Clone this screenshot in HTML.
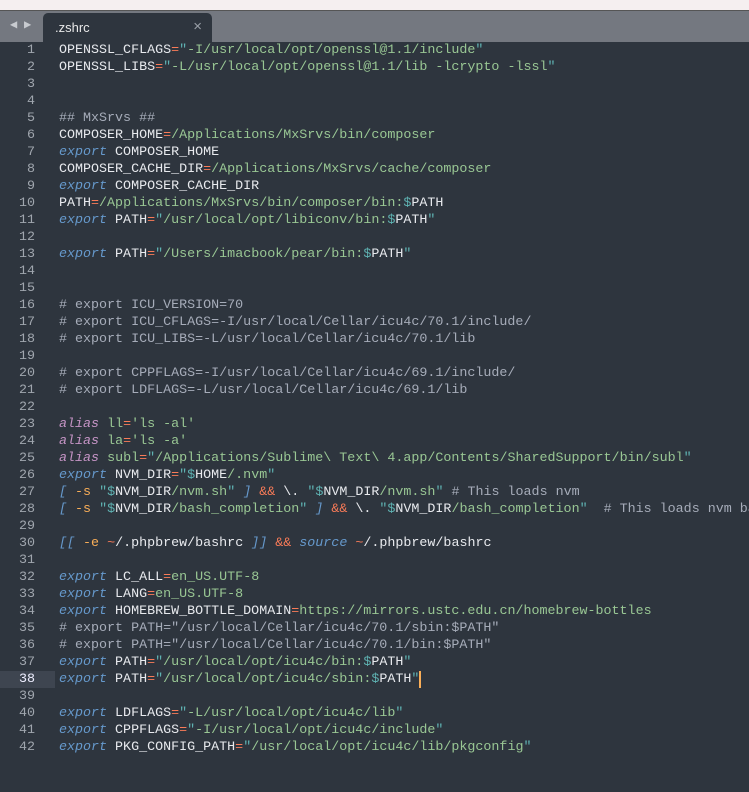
<!DOCTYPE html>
<html><head><meta charset="utf-8"><style>
body{margin:0;width:749px;height:792px;overflow:hidden;background:#2e353e;font-family:"Liberation Mono",monospace;position:relative;}
.top{position:absolute;left:0;top:0;width:749px;height:10px;background:#f5eff0;border-bottom:1px solid #555;}
.bar{position:absolute;left:0;top:11px;width:749px;height:31px;background:#747880;}
.tab{position:absolute;left:43px;top:13px;width:169px;height:29px;background:#2e353e;border-radius:5px 5px 0 0;font-family:"Liberation Sans",sans-serif;font-size:13px;color:#e8e8e8;}
.tab .n{position:absolute;left:12px;top:7px;}
.tab .x{position:absolute;right:10px;top:5px;color:#9aa0a8;font-size:15px;}
.arr{position:absolute;top:17px;font-size:12px;color:#c8cbd0;}
.g{position:absolute;left:0;top:42px;width:55px;}
.g div{height:17px;line-height:17px;font-size:13.35px;color:#a0a6ae;text-align:right;padding-right:20px;}
.g div.h{background:#3e4550;color:#eef;}
.code{position:absolute;left:59px;top:42px;width:690px;overflow:hidden;font-size:13.35px;color:#e8eaee;}
.code div{height:17px;line-height:17px;white-space:pre;}
.k{color:#6699cc;font-style:italic}.p{color:#c594c5;font-style:italic}.s{color:#99c794}.q{color:#5fb3b3}.o{color:#f97b58}.c{color:#a6acb9}.y{color:#f9ae58}
.cur{display:inline-block;width:2px;height:17px;background:#f9ae58;vertical-align:top;}
</style></head><body>
<div class="top"></div><div class="bar"></div>
<div class="arr" style="left:10px">◀</div><div class="arr" style="left:24px">▶</div>
<div class="tab"><span class="n">.zshrc</span><span class="x">×</span></div>
<div class="g">
<div>1</div><div>2</div><div>3</div><div>4</div><div>5</div><div>6</div><div>7</div><div>8</div><div>9</div><div>10</div><div>11</div><div>12</div><div>13</div><div>14</div><div>15</div><div>16</div><div>17</div><div>18</div><div>19</div><div>20</div><div>21</div><div>22</div><div>23</div><div>24</div><div>25</div><div>26</div><div>27</div><div>28</div><div>29</div><div>30</div><div>31</div><div>32</div><div>33</div><div>34</div><div>35</div><div>36</div><div>37</div><div class="h">38</div><div>39</div><div>40</div><div>41</div><div>42</div>
</div>
<div class="code">
<div>OPENSSL_CFLAGS<span class="o">=</span><span class="q">"</span><span class="s">-I/usr/local/opt/openssl@1.1/include</span><span class="q">"</span></div>
<div>OPENSSL_LIBS<span class="o">=</span><span class="q">"</span><span class="s">-L/usr/local/opt/openssl@1.1/lib -lcrypto -lssl</span><span class="q">"</span></div>
<div> </div>
<div> </div>
<div class="c">## MxSrvs ##</div>
<div>COMPOSER_HOME<span class="o">=</span><span class="s">/Applications/MxSrvs/bin/composer</span></div>
<div><span class="k">export</span> COMPOSER_HOME</div>
<div>COMPOSER_CACHE_DIR<span class="o">=</span><span class="s">/Applications/MxSrvs/cache/composer</span></div>
<div><span class="k">export</span> COMPOSER_CACHE_DIR</div>
<div>PATH<span class="o">=</span><span class="s">/Applications/MxSrvs/bin/composer/bin:</span><span class="q">$</span>PATH</div>
<div><span class="k">export</span> PATH<span class="o">=</span><span class="q">"</span><span class="s">/usr/local/opt/libiconv/bin:</span><span class="q">$</span>PATH<span class="q">"</span></div>
<div> </div>
<div><span class="k">export</span> PATH<span class="o">=</span><span class="q">"</span><span class="s">/Users/imacbook/pear/bin:</span><span class="q">$</span>PATH<span class="q">"</span></div>
<div> </div>
<div> </div>
<div class="c"># export ICU_VERSION=70</div>
<div class="c"># export ICU_CFLAGS=-I/usr/local/Cellar/icu4c/70.1/include/</div>
<div class="c"># export ICU_LIBS=-L/usr/local/Cellar/icu4c/70.1/lib</div>
<div> </div>
<div class="c"># export CPPFLAGS=-I/usr/local/Cellar/icu4c/69.1/include/</div>
<div class="c"># export LDFLAGS=-L/usr/local/Cellar/icu4c/69.1/lib</div>
<div> </div>
<div><span class="p">alias</span> <span class="s">ll</span><span class="o">=</span><span class="s">'ls -al'</span></div>
<div><span class="p">alias</span> <span class="s">la</span><span class="o">=</span><span class="s">'ls -a'</span></div>
<div><span class="p">alias</span> <span class="s">subl</span><span class="o">=</span><span class="q">"</span><span class="s">/Applications/Sublime\ Text\ 4.app/Contents/SharedSupport/bin/subl</span><span class="q">"</span></div>
<div><span class="k">export</span> NVM_DIR<span class="o">=</span><span class="q">"$</span>HOME<span class="s">/.nvm</span><span class="q">"</span></div>
<div><span class="k">[</span> <span class="y">-s</span> <span class="q">"$</span>NVM_DIR<span class="s">/nvm.sh</span><span class="q">"</span> <span class="k">]</span> <span class="o">&amp;&amp;</span> \. <span class="q">"$</span>NVM_DIR<span class="s">/nvm.sh</span><span class="q">"</span> <span class="c"># This loads nvm</span></div>
<div><span class="k">[</span> <span class="y">-s</span> <span class="q">"$</span>NVM_DIR<span class="s">/bash_completion</span><span class="q">"</span> <span class="k">]</span> <span class="o">&amp;&amp;</span> \. <span class="q">"$</span>NVM_DIR<span class="s">/bash_completion</span><span class="q">"</span>  <span class="c"># This loads nvm bash_completion</span></div>
<div> </div>
<div><span class="k">[[</span> <span class="y">-e</span> <span class="o">~</span>/.phpbrew/bashrc <span class="k">]]</span> <span class="o">&amp;&amp;</span> <span class="k">source</span> <span class="o">~</span>/.phpbrew/bashrc</div>
<div> </div>
<div><span class="k">export</span> LC_ALL<span class="o">=</span><span class="s">en_US.UTF-8</span></div>
<div><span class="k">export</span> LANG<span class="o">=</span><span class="s">en_US.UTF-8</span></div>
<div><span class="k">export</span> HOMEBREW_BOTTLE_DOMAIN<span class="o">=</span><span class="s">https://mirrors.ustc.edu.cn/homebrew-bottles</span></div>
<div class="c"># export PATH="/usr/local/Cellar/icu4c/70.1/sbin:$PATH"</div>
<div class="c"># export PATH="/usr/local/Cellar/icu4c/70.1/bin:$PATH"</div>
<div><span class="k">export</span> PATH<span class="o">=</span><span class="q">"</span><span class="s">/usr/local/opt/icu4c/bin:</span><span class="q">$</span>PATH<span class="q">"</span></div>
<div><span class="k">export</span> PATH<span class="o">=</span><span class="q">"</span><span class="s">/usr/local/opt/icu4c/sbin:</span><span class="q">$</span>PATH<span class="q">"</span><span class="cur"></span></div>
<div> </div>
<div><span class="k">export</span> LDFLAGS<span class="o">=</span><span class="q">"</span><span class="s">-L/usr/local/opt/icu4c/lib</span><span class="q">"</span></div>
<div><span class="k">export</span> CPPFLAGS<span class="o">=</span><span class="q">"</span><span class="s">-I/usr/local/opt/icu4c/include</span><span class="q">"</span></div>
<div><span class="k">export</span> PKG_CONFIG_PATH<span class="o">=</span><span class="q">"</span><span class="s">/usr/local/opt/icu4c/lib/pkgconfig</span><span class="q">"</span></div>
</div>
</body></html>
